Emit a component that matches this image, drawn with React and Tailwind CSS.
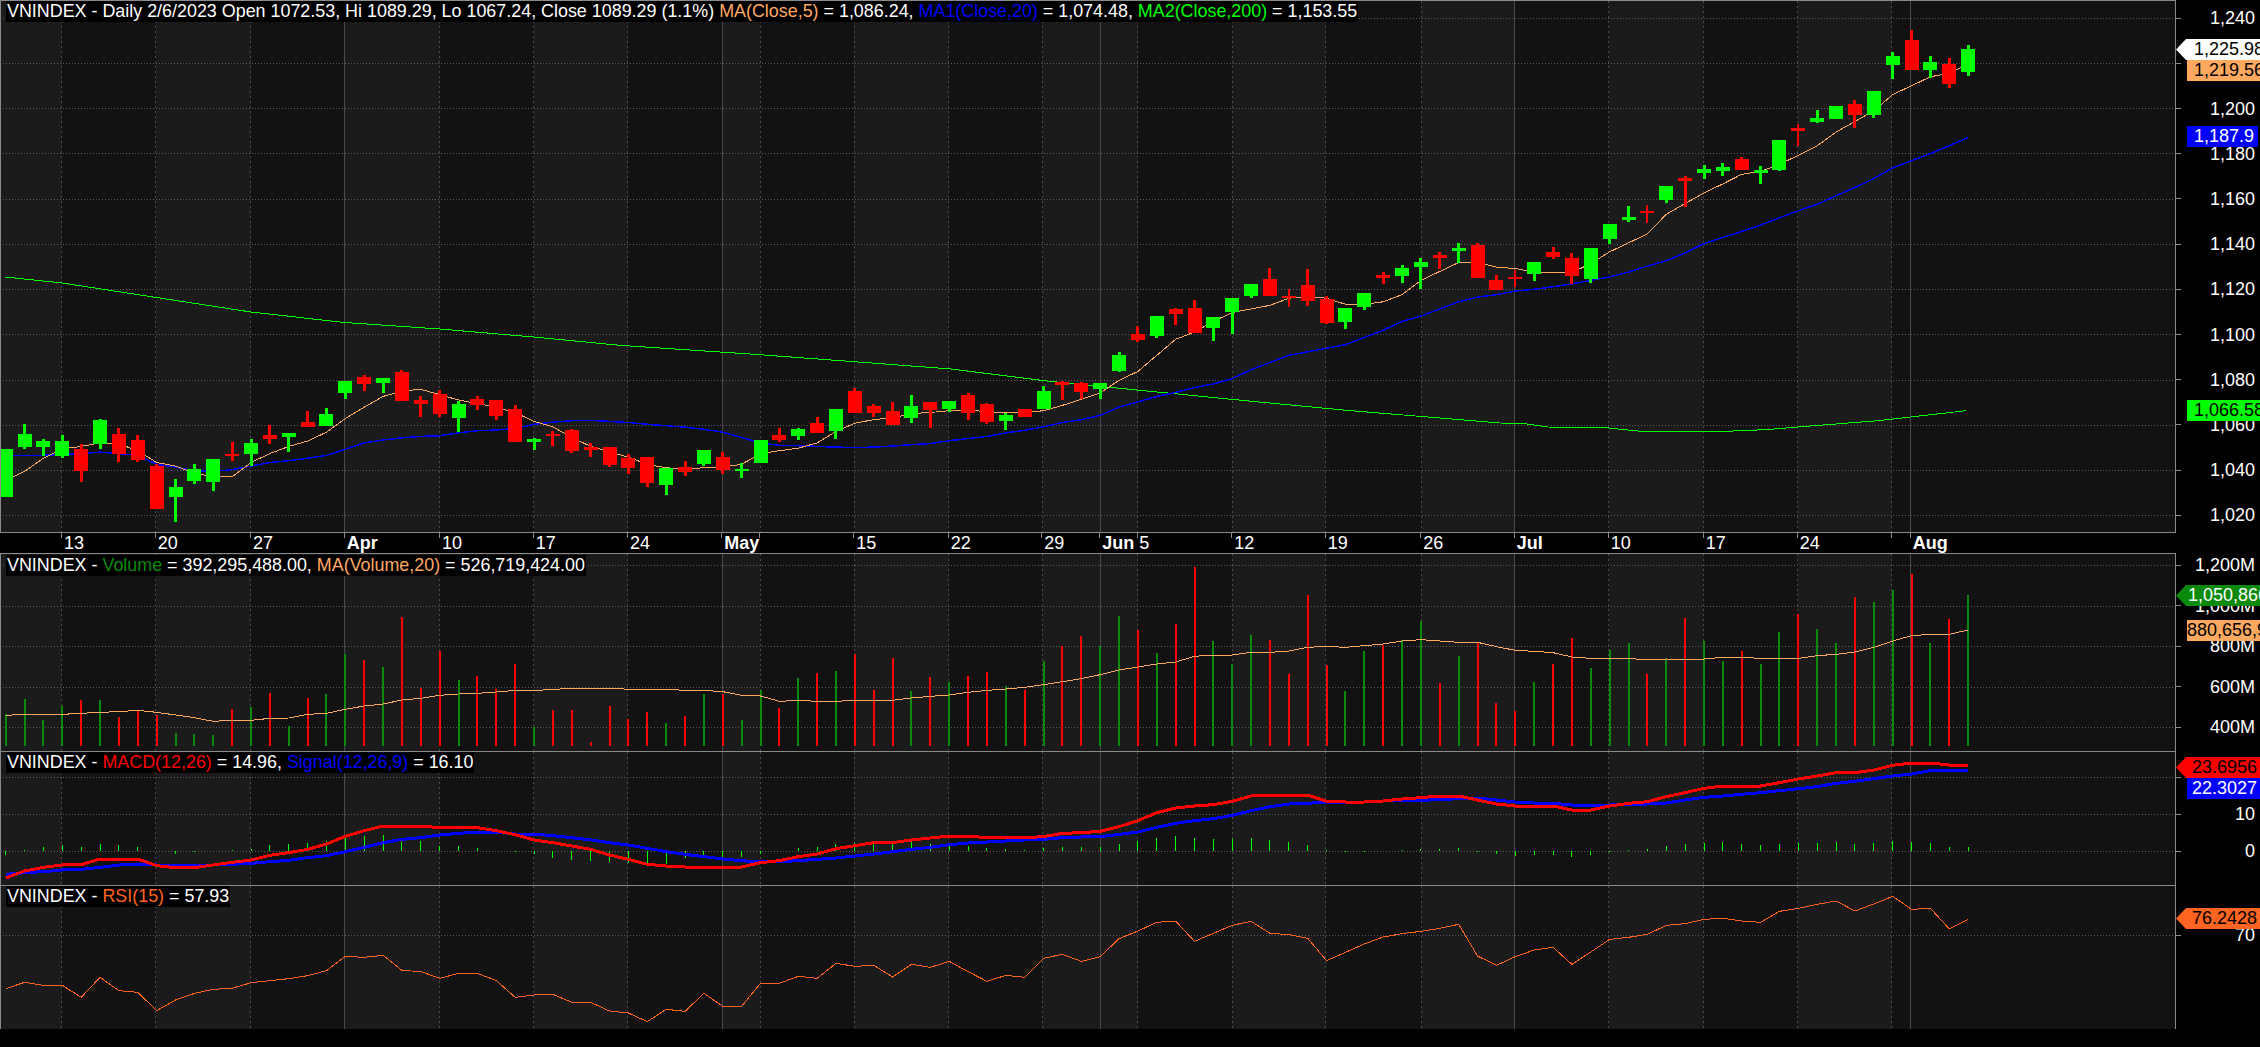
import React from 'react';

// sampled off the chart: price-pane rows are y * 2.8, lower panes are (y - 540) * 3
const candles = [
  ['g', 1257, 1257, 1392, 1392], ['g', 1187, 1215, 1252, 1257], ['g', 1229, 1236, 1252, 1277], ['g', 1218, 1236, 1277, 1282],
  ['r', 1243, 1257, 1319, 1350], ['g', 1173, 1176, 1243, 1257], ['r', 1198, 1215, 1271, 1294], ['r', 1218, 1232, 1288, 1294],
  ['r', 1299, 1305, 1425, 1425], ['g', 1341, 1364, 1391, 1462], ['g', 1300, 1313, 1348, 1355], ['g', 1285, 1285, 1350, 1375],
  ['r', 1238, 1270, 1278, 1291], ['g', 1229, 1240, 1271, 1305], ['r', 1190, 1218, 1229, 1243], ['g', 1212, 1212, 1224, 1266],
  ['r', 1152, 1182, 1196, 1196], ['g', 1143, 1159, 1193, 1193], ['g', 1067, 1067, 1100, 1117], ['r', 1050, 1056, 1075, 1095],
  ['g', 1058, 1058, 1072, 1100], ['r', 1036, 1042, 1123, 1123], ['r', 1109, 1120, 1130, 1168], ['r', 1093, 1103, 1159, 1168],
  ['g', 1123, 1131, 1170, 1210], ['r', 1109, 1117, 1133, 1148], ['r', 1120, 1120, 1165, 1176], ['r', 1135, 1145, 1238, 1238],
  ['g', 1225, 1229, 1238, 1260], ['r', 1207, 1214, 1222, 1249], ['r', 1201, 1203, 1264, 1268], ['r', 1240, 1252, 1260, 1280],
  ['r', 1252, 1252, 1302, 1307], ['r', 1271, 1282, 1310, 1328], ['r', 1280, 1280, 1352, 1364], ['g', 1310, 1310, 1358, 1386],
  ['r', 1291, 1307, 1322, 1334], ['g', 1260, 1260, 1299, 1305], ['r', 1266, 1280, 1315, 1327], ['g', 1296, 1314, 1319, 1338],
  ['g', 1232, 1232, 1296, 1296], ['r', 1198, 1218, 1232, 1238], ['g', 1198, 1202, 1220, 1232], ['r', 1168, 1184, 1212, 1212],
  ['g', 1145, 1145, 1207, 1229], ['r', 1087, 1095, 1156, 1156], ['r', 1132, 1138, 1156, 1168], ['r', 1126, 1151, 1190, 1190],
  ['g', 1106, 1137, 1170, 1184], ['r', 1126, 1126, 1148, 1197], ['g', 1123, 1123, 1145, 1154], ['r', 1100, 1106, 1156, 1176],
  ['r', 1129, 1131, 1182, 1187], ['g', 1157, 1162, 1179, 1204], ['r', 1145, 1145, 1168, 1168], ['g', 1081, 1095, 1145, 1145],
  ['r', 1067, 1070, 1078, 1120], ['r', 1070, 1072, 1098, 1118], ['g', 1072, 1072, 1089, 1117], ['g', 986, 995, 1040, 1042],
  ['r', 913, 936, 951, 958], ['g', 886, 886, 940, 946], ['r', 861, 864, 879, 910], ['r', 840, 862, 932, 932],
  ['g', 888, 888, 917, 955], ['g', 834, 834, 873, 935], ['g', 795, 795, 829, 834], ['r', 750, 781, 829, 829],
  ['r', 809, 829, 835, 860], ['r', 753, 798, 843, 857], ['r', 829, 837, 904, 908], ['g', 862, 862, 902, 921],
  ['g', 820, 820, 860, 868], ['r', 762, 770, 778, 795], ['g', 742, 750, 773, 792], ['g', 722, 734, 748, 809],
  ['r', 706, 715, 722, 753], ['g', 680, 694, 704, 735], ['r', 680, 686, 778, 778], ['r', 770, 785, 811, 811],
  ['r', 755, 775, 780, 803], ['g', 734, 734, 766, 787], ['r', 692, 706, 719, 725], ['r', 708, 722, 773, 795],
  ['g', 694, 694, 781, 792], ['g', 627, 627, 669, 683], ['g', 577, 607, 616, 622], ['r', 574, 590, 597, 624],
  ['g', 521, 521, 560, 568], ['r', 494, 498, 507, 580], ['g', 462, 472, 485, 501], ['g', 456, 467, 478, 493],
  ['r', 440, 446, 476, 476], ['g', 465, 476, 485, 515], ['g', 392, 392, 476, 479], ['r', 347, 359, 367, 410],
  ['g', 308, 331, 342, 345], ['g', 297, 297, 333, 333], ['r', 280, 292, 322, 358], ['g', 255, 255, 322, 330],
  ['g', 146, 157, 182, 221], ['r', 84, 112, 195, 195], ['g', 157, 174, 195, 219], ['r', 162, 179, 235, 245],
  ['g', 126, 137, 202, 213],
];
const thinCandles = [68, 80, 87, 95];

const ma5 = [1345, 1320, 1283, 1257, 1250, 1240, 1243, 1262, 1295, 1305, 1325, 1335, 1335, 1295, 1270, 1250, 1235, 1210, 1172, 1140,
  1110, 1095, 1090, 1105, 1120, 1130, 1140, 1155, 1180, 1195, 1225, 1250, 1265, 1280, 1300, 1310, 1312, 1310, 1308, 1300,
  1270, 1262, 1255, 1240, 1208, 1185, 1175, 1170, 1158, 1155, 1150, 1148, 1153, 1155, 1155, 1150, 1135, 1118, 1100, 1065,
  1040, 995, 950, 930, 900, 875, 865, 855, 835, 830, 835, 852, 852, 845, 825, 785, 760, 735, 735, 748,
  752, 762, 763, 763, 738, 705, 680, 655, 600, 570, 540, 515, 488, 480, 460, 435, 408, 370, 340, 310, 265, 240, 215, 205, 180];

const ma20 = [1275, 1275, 1275, 1272, 1270, 1266, 1270, 1275, 1300, 1308, 1318, 1320, 1315, 1305, 1295, 1290, 1283, 1275, 1258, 1240,
  1232, 1226, 1222, 1220, 1212, 1206, 1204, 1200, 1188, 1182, 1178, 1177, 1180, 1183, 1188, 1192, 1196, 1202, 1210, 1225,
  1240, 1247, 1248, 1250, 1252, 1253, 1252, 1249, 1245, 1242, 1234, 1228, 1222, 1212, 1205, 1195, 1183, 1175, 1163, 1140,
  1125, 1110, 1099, 1085, 1075, 1060, 1035, 1015, 995, 985, 975, 965, 945, 925, 900, 885, 865, 845, 832, 825,
  815, 810, 803, 795, 785, 775, 762, 745, 730, 708, 682, 665, 648, 630, 610, 590, 572, 548, 525, 500, 470, 450, 430, 408, 385];

const ma200 = [[5, 277], [62, 283], [153, 297], [251, 312], [344.5, 322.5], [440, 329], [533.5, 337], [622, 345.5], [750, 354], [865, 362.5],
  [951, 369], [1047, 381], [1114, 387.7], [1228, 399], [1343, 410], [1500, 423], [1524, 423.5], [1548, 427], [1608.6, 428], [1638, 431],
  [1733, 431], [1766.6, 429.6], [1810, 426], [1878, 420.7], [1966, 410.7]];

const volumes = ['g522', 'g477', 'g540', 'g498', 'r480', 'g480', 'r531', 'r513', 'r525', 'g579', 'g582', 'g585', 'r507', 'g501', 'r459',
  'g558', 'r474', 'g462', 'g342', 'r360', 'g381', 'r231', 'r444', 'r333', 'g420', 'r408', 'r447', 'r372', 'g561', 'r510', 'r510', 'r606',
  'r498', 'r537', 'r516', 'g549', 'r528', 'g462', 'r462', 'g540', 'g450', 'r504', 'g414', 'r399', 'g393', 'r342', 'r450', 'r354', 'g453',
  'r411', 'g426', 'r408', 'r396', 'g438', 'r450', 'g363', 'r318', 'r288', 'g318', 'g228', 'r269', 'g339', 'r252', 'r81', 'g303', 'g372',
  'g285', 'r300', 'r402', 'r165', 'r375', 'g453', 'g333', 'r315', 'g300', 'g243', 'r429', 'g348', 'r307', 'r489', 'r513', 'g426', 'r372',
  'r294', 'g384', 'g330', 'g309', 'r402', 'g357', 'r234', 'g303', 'g363', 'r333', 'g372', 'g276', 'r222', 'g267', 'g309', 'r171', 'g186',
  'g150', 'r102', 'g309', 'r237', 'g165'];

const volumeMa = [526, 523, 523, 523, 520, 517, 515, 511, 517, 525, 533, 544, 541, 541, 535, 534, 523, 520, 508, 498, 492, 480, 475, 466, 462,
  460, 456, 451, 451, 449, 444, 444, 444, 448, 448, 448, 451, 451, 455, 466, 468, 484, 481, 484, 484, 481, 481, 481, 474, 469, 465, 457, 451,
  447, 442, 434, 425, 416, 404, 390, 381, 372, 366, 349, 345, 345, 337, 337, 333, 322, 319, 322, 317, 312, 303, 299, 303, 307, 307, 320, 331,
  334, 338, 351, 355, 355, 355, 360, 357, 360, 357, 352, 352, 355, 355, 355, 347, 343, 336, 322, 303, 287, 283, 283, 270];

const macd = [1014, 993, 982, 975, 974, 957, 957, 957, 977, 983, 983, 975, 967, 960, 946, 938, 928, 912, 889, 872, 858, 858, 858, 863, 863, 863,
  872, 884, 900, 908, 918, 928, 945, 958, 973, 978, 981, 981, 981, 981, 968, 962, 950, 942, 926, 917, 908, 908, 900, 894, 888, 888, 893, 893,
  893, 890, 880, 878, 874, 860, 842, 818, 804, 798, 794, 784, 768, 765, 765, 765, 784, 786, 786, 783, 777, 773, 768, 768, 780, 792, 798, 798,
  798, 810, 810, 798, 790, 785, 770, 758, 745, 738, 738, 738, 728, 717, 708, 698, 698, 690, 676, 669, 669, 675, 675];

const signal = [1003, 998, 995, 990, 988, 982, 975, 972, 975, 975, 975, 975, 973, 970, 965, 961, 953, 947, 935, 922, 908, 898, 893, 885, 880, 876,
  876, 882, 882, 887, 893, 900, 908, 915, 925, 935, 943, 950, 957, 962, 966, 965, 962, 958, 954, 948, 942, 935, 928, 922, 914, 909, 906, 903,
  900, 898, 893, 891, 890, 883, 876, 862, 850, 842, 836, 826, 812, 800, 792, 790, 786, 786, 786, 783, 781, 781, 779, 776, 774, 780, 786, 789,
  790, 795, 795, 795, 793, 792, 789, 780, 772, 768, 763, 758, 752, 746, 740, 730, 724, 716, 708, 702, 692, 690, 690];

const histogram = [944, 930, 922, 915, 922, 912, 915, 921, 932, 942, 935, 933, 931, 928, 914, 912, 910, 903, 890, 888, 885, 905, 904, 917, 918, 925,
  933, 935, 942, 955, 960, 963, 966, 970, 972, 972, 955, 953, 955, 952, 941, 932, 924, 921, 912, 908, 906, 910, 907, 912, 916, 918, 923, 927,
  931, 923, 921, 922, 922, 912, 904, 895, 889, 894, 897, 898, 894, 900, 906, 915, 931, 935, 935, 932, 930, 927, 927, 924, 935, 942, 947, 945,
  945, 951, 945, 935, 931, 927, 918, 912, 909, 906, 912, 915, 912, 909, 909, 906, 912, 909, 903, 906, 909, 921, 921];

const rsi = [1346, 1327, 1336, 1336, 1372, 1312, 1352, 1357, 1412, 1380, 1360, 1348, 1345, 1328, 1322, 1316, 1307, 1292, 1249, 1252, 1246, 1291, 1295,
  1315, 1300, 1300, 1322, 1372, 1365, 1363, 1387, 1387, 1413, 1419, 1445, 1408, 1414, 1360, 1399, 1399, 1330, 1330, 1309, 1315, 1270, 1279, 1276,
  1311, 1273, 1282, 1264, 1295, 1324, 1306, 1312, 1255, 1243, 1264, 1250, 1196, 1173, 1147, 1143, 1204, 1180, 1156, 1144, 1180, 1184, 1195, 1262,
  1237, 1212, 1191, 1181, 1174, 1165, 1153, 1248, 1276, 1250, 1230, 1222, 1273, 1236, 1198, 1192, 1183, 1156, 1151, 1138, 1135, 1143, 1147, 1114,
  1105, 1093, 1083, 1113, 1092, 1069, 1108, 1105, 1167, 1138];

const weekLines = [61.7, 155.5, 250.7, 439.7, 533.5, 627.7, 760, 854, 948.6, 1042, 1137.6, 1232, 1325.6, 1421, 1608.6, 1703.6, 1797.6, 1891.7];
const monthLines = [344.5, 722, 1100, 1514.5, 1910.6];
const lightBands = [[0, 61.7], [155.5, 250.7], [344.5, 439.7], [533.5, 627.7], [722, 760], [854, 948.6], [1042, 1137.6], [1232, 1325.6], [1421, 1514.5], [1608.6, 1703.6], [1797.6, 1891.7]];

const dateTicks = [
  { x: 61.7, text: '13' }, { x: 155.5, text: '20' }, { x: 250.7, text: '27' }, { x: 344.5, text: 'Apr', bold: true },
  { x: 439.7, text: '10' }, { x: 533.5, text: '17' }, { x: 627.7, text: '24' }, { x: 722, text: 'May', bold: true },
  { x: 760 }, { x: 854, text: '15' }, { x: 948.6, text: '22' }, { x: 1042, text: '29' }, { x: 1100, text: 'Jun', bold: true, suffix: ' 5' },
  { x: 1137.6 }, { x: 1232, text: '12' }, { x: 1325.6, text: '19' }, { x: 1421, text: '26' }, { x: 1514.5, text: 'Jul', bold: true },
  { x: 1608.6, text: '10' }, { x: 1703.6, text: '17' }, { x: 1797.6, text: '24' }, { x: 1891.7 }, { x: 1910.6, text: 'Aug', bold: true },
  { x: 2175 },
];

const priceGrid = [18.2, 63.2, 108.2, 153.6, 199.3, 244.3, 289.3, 334.3, 380, 425.4, 470.4, 515.4];
const volumeGrid = [565.3, 606.3, 646.3, 687.3, 727.3];
const macdGrid = [777.3, 814.3, 851.3];
const rsiGrid = [935.3];

const GREEN = '#00ff00';
const RED = '#ff0000';
const BLUE = '#0000ff';
const PEACH = '#ffa860';
const ORANGE = '#ff6420';
const DARK_GREEN = '#0a8a0a';

const barX = (i) => 5.7 + 18.87 * i;
const priceY = (v) => v / 2.8;
const lowerY = (v) => 540 + v / 3;
const toPoints = (values, toY) => values.map((v, i) => `${barX(i)},${toY(v)}`).join(' ');

const PlotArea = ({ top, height, grid, children }) => (
  <svg
    width={2174}
    height={height}
    viewBox={`1 ${top} 2174 ${height}`}
    shapeRendering="crispEdges"
    className="block"
  >
    <rect x={0} y={top} width={2176} height={height} fill="#121212" />
    {lightBands.map(([a, b]) => (
      <rect key={a} x={a} y={top} width={b - a} height={height} fill="#1b1b1b" />
    ))}
    {grid.map((y) => (
      <line key={y} x1={3} x2={2175} y1={y} y2={y} stroke="#5c5c5c" strokeDasharray="1 2" />
    ))}
    {weekLines.map((x) => (
      <line key={x} x1={x} x2={x} y1={top} y2={top + height} stroke="#4a4a4a" strokeDasharray="2 3" />
    ))}
    {monthLines.map((x) => (
      <line key={x} x1={x} x2={x} y1={top} y2={top + height} stroke="#4a4a4a" />
    ))}
    {children}
  </svg>
);

const Legend = ({ children, className }) => (
  <div className={`absolute left-[5px] bg-black text-white text-[17.9px] whitespace-nowrap px-px h-[21px] leading-[21px] ${className}`}>
    {children}
  </div>
);

const AxisTicks = ({ labels, className, rowClass }) => (
  <div className={`flex flex-col ${className}`}>
    {labels.map((t) => (
      <div key={t} className={`flex items-center justify-between shrink-0 pr-[5px] ${rowClass}`}>
        <div className="w-[5px] h-px bg-[#8a8a8a]" />
        <span className="leading-[20px] text-white">{t}</span>
      </div>
    ))}
  </div>
);

// value tags sit over the axis labels, same as in the original chart
const Flag = ({ className, color, textColor, tip, text, pad = 'pl-[7px]', bodyClass = '' }) => (
  <div className={`absolute left-0 right-0 flex h-[21px] ${className}`}>
    {tip ? (
      <svg width={11} height={21} viewBox="0 0 11 21" className="shrink-0">
        <polygon points="0,10.5 10,0 11,0 11,21 10,21" fill={color} />
      </svg>
    ) : (
      <div className="w-[11px] shrink-0" />
    )}
    <div
      className={`flex-1 min-w-0 overflow-hidden whitespace-nowrap leading-[21px] ${pad} ${bodyClass}`}
      style={{ background: color, color: textColor }}
    >
      {text}
    </div>
  </div>
);

const DateStrip = () => (
  <div className="flex w-[2176px] h-[21px] border-b border-[#8a8a8a] text-white leading-[20px]">
    <div className="w-[61px] shrink-0" />
    {dateTicks.slice(0, -1).map((d, i) => (
      <div key={d.x} className="flex shrink-0 whitespace-pre" style={{ width: dateTicks[i + 1].x - d.x }}>
        <div className="w-px h-[5px] bg-[#8a8a8a] shrink-0" />
        {d.text && (
          <div className="pl-[2px]">
            <span className={d.bold ? 'font-bold' : ''}>{d.text}</span>
            {d.suffix}
          </div>
        )}
      </div>
    ))}
  </div>
);

export default function App() {
  return (
    <div className="flex flex-col w-[2260px] h-[1047px] overflow-hidden bg-black text-[18px] font-['Liberation_Sans',Arial,sans-serif]">
      {/* price */}
      <div className="flex h-[533px] shrink-0">
        <div className="relative w-[2176px] shrink-0 border border-[#8a8a8a]">
          <PlotArea top={1} height={531} grid={priceGrid}>
            <polyline points={ma200.map((p) => p.join(',')).join(' ')} fill="none" stroke={GREEN} />
            <polyline points={toPoints(ma20, priceY)} fill="none" stroke={BLUE} strokeWidth={1.5} />
            <polyline points={toPoints(ma5, priceY)} fill="none" stroke={PEACH} />
            {candles.map(([c, hi, top, bottom, lo], i) => {
              const thin = thinCandles.includes(i);
              const fill = c === 'g' ? GREEN : RED;
              return (
                <g key={i} fill={fill}>
                  <rect x={barX(i) - (thin ? 1 : 1.5)} y={priceY(hi)} width={thin ? 2 : 3} height={priceY(lo - hi)} />
                  <rect x={barX(i) - 7} y={priceY(top)} width={14} height={Math.max(priceY(bottom - top), 2)} />
                </g>
              );
            })}
          </PlotArea>
          <Legend className="top-0">
            VNINDEX - Daily 2/6/2023 Open 1072.53, Hi 1089.29, Lo 1067.24, Close 1089.29 (1.1%){' '}
            <span className="text-[#ffa860]">MA(Close,5)</span> = 1,086.24,{' '}
            <span className="text-[#0000ff]">MA1(Close,20)</span> = 1,074.48,{' '}
            <span className="text-[#00ff00]">MA2(Close,200)</span> = 1,153.55
          </Legend>
        </div>
        <div className="relative flex-1">
          <AxisTicks
            labels={['1,240', '1,220', '1,200', '1,180', '1,160', '1,140', '1,120', '1,100', '1,080', '1,060', '1,040', '1,020']}
            className="-mt-[4.4px]"
            rowClass="h-[45.2px]"
          />
          <Flag className="top-[39px]" tip color="#ffffff" textColor="#000000" text="1,225.98" />
          <Flag className="top-[60px]" color={PEACH} textColor="#000000" text="1,219.56" />
          <Flag className="top-[126px]" color={BLUE} textColor="#ffffff" text="1,187.9" bodyClass="mr-[2px]" />
          <Flag className="top-[400px]" color={GREEN} textColor="#000000" text="1,066.58" />
        </div>
      </div>

      <DateStrip />

      {/* volume */}
      <div className="flex h-[198px] shrink-0">
        <div className="relative w-[2176px] shrink-0 border-x border-b border-[#8a8a8a]">
          <PlotArea top={554} height={197} grid={volumeGrid}>
            {volumes.map((v, i) => {
              const y = lowerY(Number(v.slice(1)));
              return (
                <rect key={i} x={barX(i) - 1} y={y} width={2} height={746 - y} fill={v[0] === 'g' ? DARK_GREEN : RED} />
              );
            })}
            <polyline points={toPoints(volumeMa, lowerY)} fill="none" stroke={PEACH} />
          </PlotArea>
          <Legend className="top-px">
            VNINDEX - <span className="text-[#0a8a0a]">Volume</span> = 392,295,488.00,{' '}
            <span className="text-[#ffa860]">MA(Volume,20)</span> = 526,719,424.00
          </Legend>
        </div>
        <div className="relative flex-1">
          <AxisTicks
            labels={['1,200M', '1,000M', '800M', '600M', '400M']}
            className="-mt-[8.95px]"
            rowClass="h-[40.5px]"
          />
          <Flag className="top-[31px]" tip color={DARK_GREEN} textColor="#ffffff" text="1,050,866,304" pad="pl-px" />
          <Flag className="top-[66px]" color={PEACH} textColor="#000000" text="880,656,960" pad="pl-0" />
        </div>
      </div>

      {/* macd */}
      <div className="flex h-[134px] shrink-0">
        <div className="relative w-[2176px] shrink-0 border-x border-b border-[#8a8a8a]">
          <PlotArea top={752} height={133} grid={macdGrid}>
            {histogram.map((v, i) => (
              <line key={i} x1={barX(i)} x2={barX(i)} y1={lowerY(934)} y2={lowerY(v)} stroke={GREEN} />
            ))}
            <polyline points={toPoints(signal, lowerY)} fill="none" stroke={BLUE} strokeWidth={3} />
            <polyline points={toPoints(macd, lowerY)} fill="none" stroke={RED} strokeWidth={3} />
          </PlotArea>
          <Legend className="top-0">
            VNINDEX - <span className="text-[#ff0000]">MACD(12,26)</span> = 14.96,{' '}
            <span className="text-[#0000ff]">Signal(12,26,9)</span> = 16.10
          </Legend>
        </div>
        <div className="relative flex-1">
          <AxisTicks labels={['20', '10', '0']} className="pt-[6.8px]" rowClass="h-[37px]" />
          <Flag className="top-[5px]" tip color={RED} textColor="#000000" text="23.6956" pad="pl-[5px]" />
          <Flag className="top-[26px]" color={BLUE} textColor="#ffffff" text="22.3027" pad="pl-[5px]" />
        </div>
      </div>

      {/* rsi */}
      <div className="flex h-[143px] shrink-0">
        <div className="relative w-[2176px] shrink-0 border-x border-[#8a8a8a]">
          <PlotArea top={886} height={143} grid={rsiGrid}>
            <polyline points={toPoints(rsi, lowerY)} fill="none" stroke={ORANGE} />
          </PlotArea>
          <Legend className="top-0">
            VNINDEX - <span className="text-[#ff6420]">RSI(15)</span> = 57.93
          </Legend>
        </div>
        <div className="relative flex-1">
          <AxisTicks labels={['70']} className="pt-[39.3px]" rowClass="h-[20px]" />
          <Flag className="top-[22px]" tip color={ORANGE} textColor="#000000" text="76.2428" pad="pl-[5px]" />
        </div>
      </div>
    </div>
  );
}
